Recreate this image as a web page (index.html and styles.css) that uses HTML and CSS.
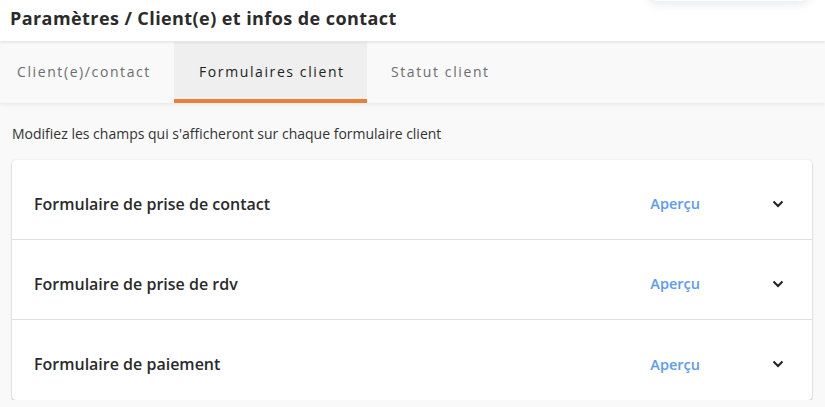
FILE: index.html
```html
<!DOCTYPE html>
<html lang="fr">
<head>
<meta charset="utf-8">
<title>Paramètres</title>
<link rel="stylesheet" href="styles.css">
</head>
<body>
<header class="topbar">
  <h1 class="title">Paramètres / Client(e) et infos de contact</h1>
  <div class="pill"></div>
</header>
<nav class="tabs">
  <div class="tab">Client(e)/contact</div>
  <div class="tab active">Formulaires client</div>
  <div class="tab">Statut client</div>
</nav>
<main class="content">
  <p class="intro">Modifiez les champs qui s'afficheront sur chaque formulaire client</p>
  <section class="card">
    <div class="row">
      <span class="row-title">Formulaire de prise de contact</span>
      <span class="preview">Aperçu</span>
      <svg class="chev" width="12" height="8" viewBox="0 0 12 8"><path d="M1.5 1.5 L6 6 L10.5 1.5" fill="none" stroke="#1f1f1f" stroke-width="2"/></svg>
    </div>
    <div class="row">
      <span class="row-title">Formulaire de prise de rdv</span>
      <span class="preview">Aperçu</span>
      <svg class="chev" width="12" height="8" viewBox="0 0 12 8"><path d="M1.5 1.5 L6 6 L10.5 1.5" fill="none" stroke="#1f1f1f" stroke-width="2"/></svg>
    </div>
    <div class="row">
      <span class="row-title">Formulaire de paiement</span>
      <span class="preview">Aperçu</span>
      <svg class="chev" width="12" height="8" viewBox="0 0 12 8"><path d="M1.5 1.5 L6 6 L10.5 1.5" fill="none" stroke="#1f1f1f" stroke-width="2"/></svg>
    </div>
  </section>
</main>
</body>
</html>
```
FILE: styles.css
```css
html, body {
  margin: 0;
  padding: 0;
  background: #f9f9f9;
  font-family: "Open Sans", "Noto Sans", sans-serif;
  overflow: hidden;
}
.topbar {
  position: relative;
  height: 41px;
  background: #ffffff;
  box-shadow: 0 1px 3px rgba(0,0,0,0.12);
  z-index: 2;
  display: flex;
  align-items: center;
  padding-left: 10px;
}
.title {
  margin: 0;
  font-family: "Open Sans", sans-serif;
  font-weight: 700;
  font-size: 18px;
  color: #2b2b2b;
  letter-spacing: 0.42px;
  margin-top: -6px;
}
.pill {
  position: absolute;
  left: 648px;
  top: -20px;
  width: 162px;
  height: 21px;
  border-radius: 10px;
  background: #ffffff;
  box-shadow: 0 4px 10px rgba(120,150,180,0.18);
}
.tabs {
  display: flex;
  height: 61px;
  background: #f9f9f9;
  box-shadow: 0 2px 3px rgba(0,0,0,0.06);
  position: relative;
  z-index: 1;
  margin-top: 1px;
}
.tab {
  display: flex;
  align-items: center;
  font-size: 14px;
  letter-spacing: 1.6px;
  color: #6d6d6d;
  padding-bottom: 2px;
  box-sizing: border-box;
  white-space: nowrap;
}
.tab:nth-child(1) { width: 174px; padding-left: 17px; }
.tab:nth-child(2) { width: 193px; padding-left: 25px; }
.tab:nth-child(3) { padding-left: 24px; }
.tab.active {
  background: #efefef;
  color: #222222;
  border-bottom: 4px solid #e8803a;
  padding-bottom: 0;
  padding-top: 2px;
}
.content {
  padding: 0 13px 0 12px;
}
.intro {
  margin: 21px 0 17px 0;
  font-size: 14px;
  color: #333333;
}
.card {
  background: #ffffff;
  border-radius: 4px;
  box-shadow: 0 1px 2px rgba(0,0,0,0.28), 0 0 2px rgba(0,0,0,0.08);
}
.row {
  height: 80px;
  display: flex;
  align-items: center;
  padding: 8px 28px 0 22px;
  border-bottom: 1px solid #e0e0e0;
  box-sizing: border-box;
}
.row:last-child {
  border-bottom: none;
}
.row-title {
  flex: 1;
  font-size: 16px;
  font-weight: 600;
  color: #2a2a2a;
  letter-spacing: 0px;
}
.preview {
  font-size: 14.5px;
  font-weight: 600;
  color: #5b9cf2;
  margin-right: 72px;
}
.chev {
  display: block;
}
```
